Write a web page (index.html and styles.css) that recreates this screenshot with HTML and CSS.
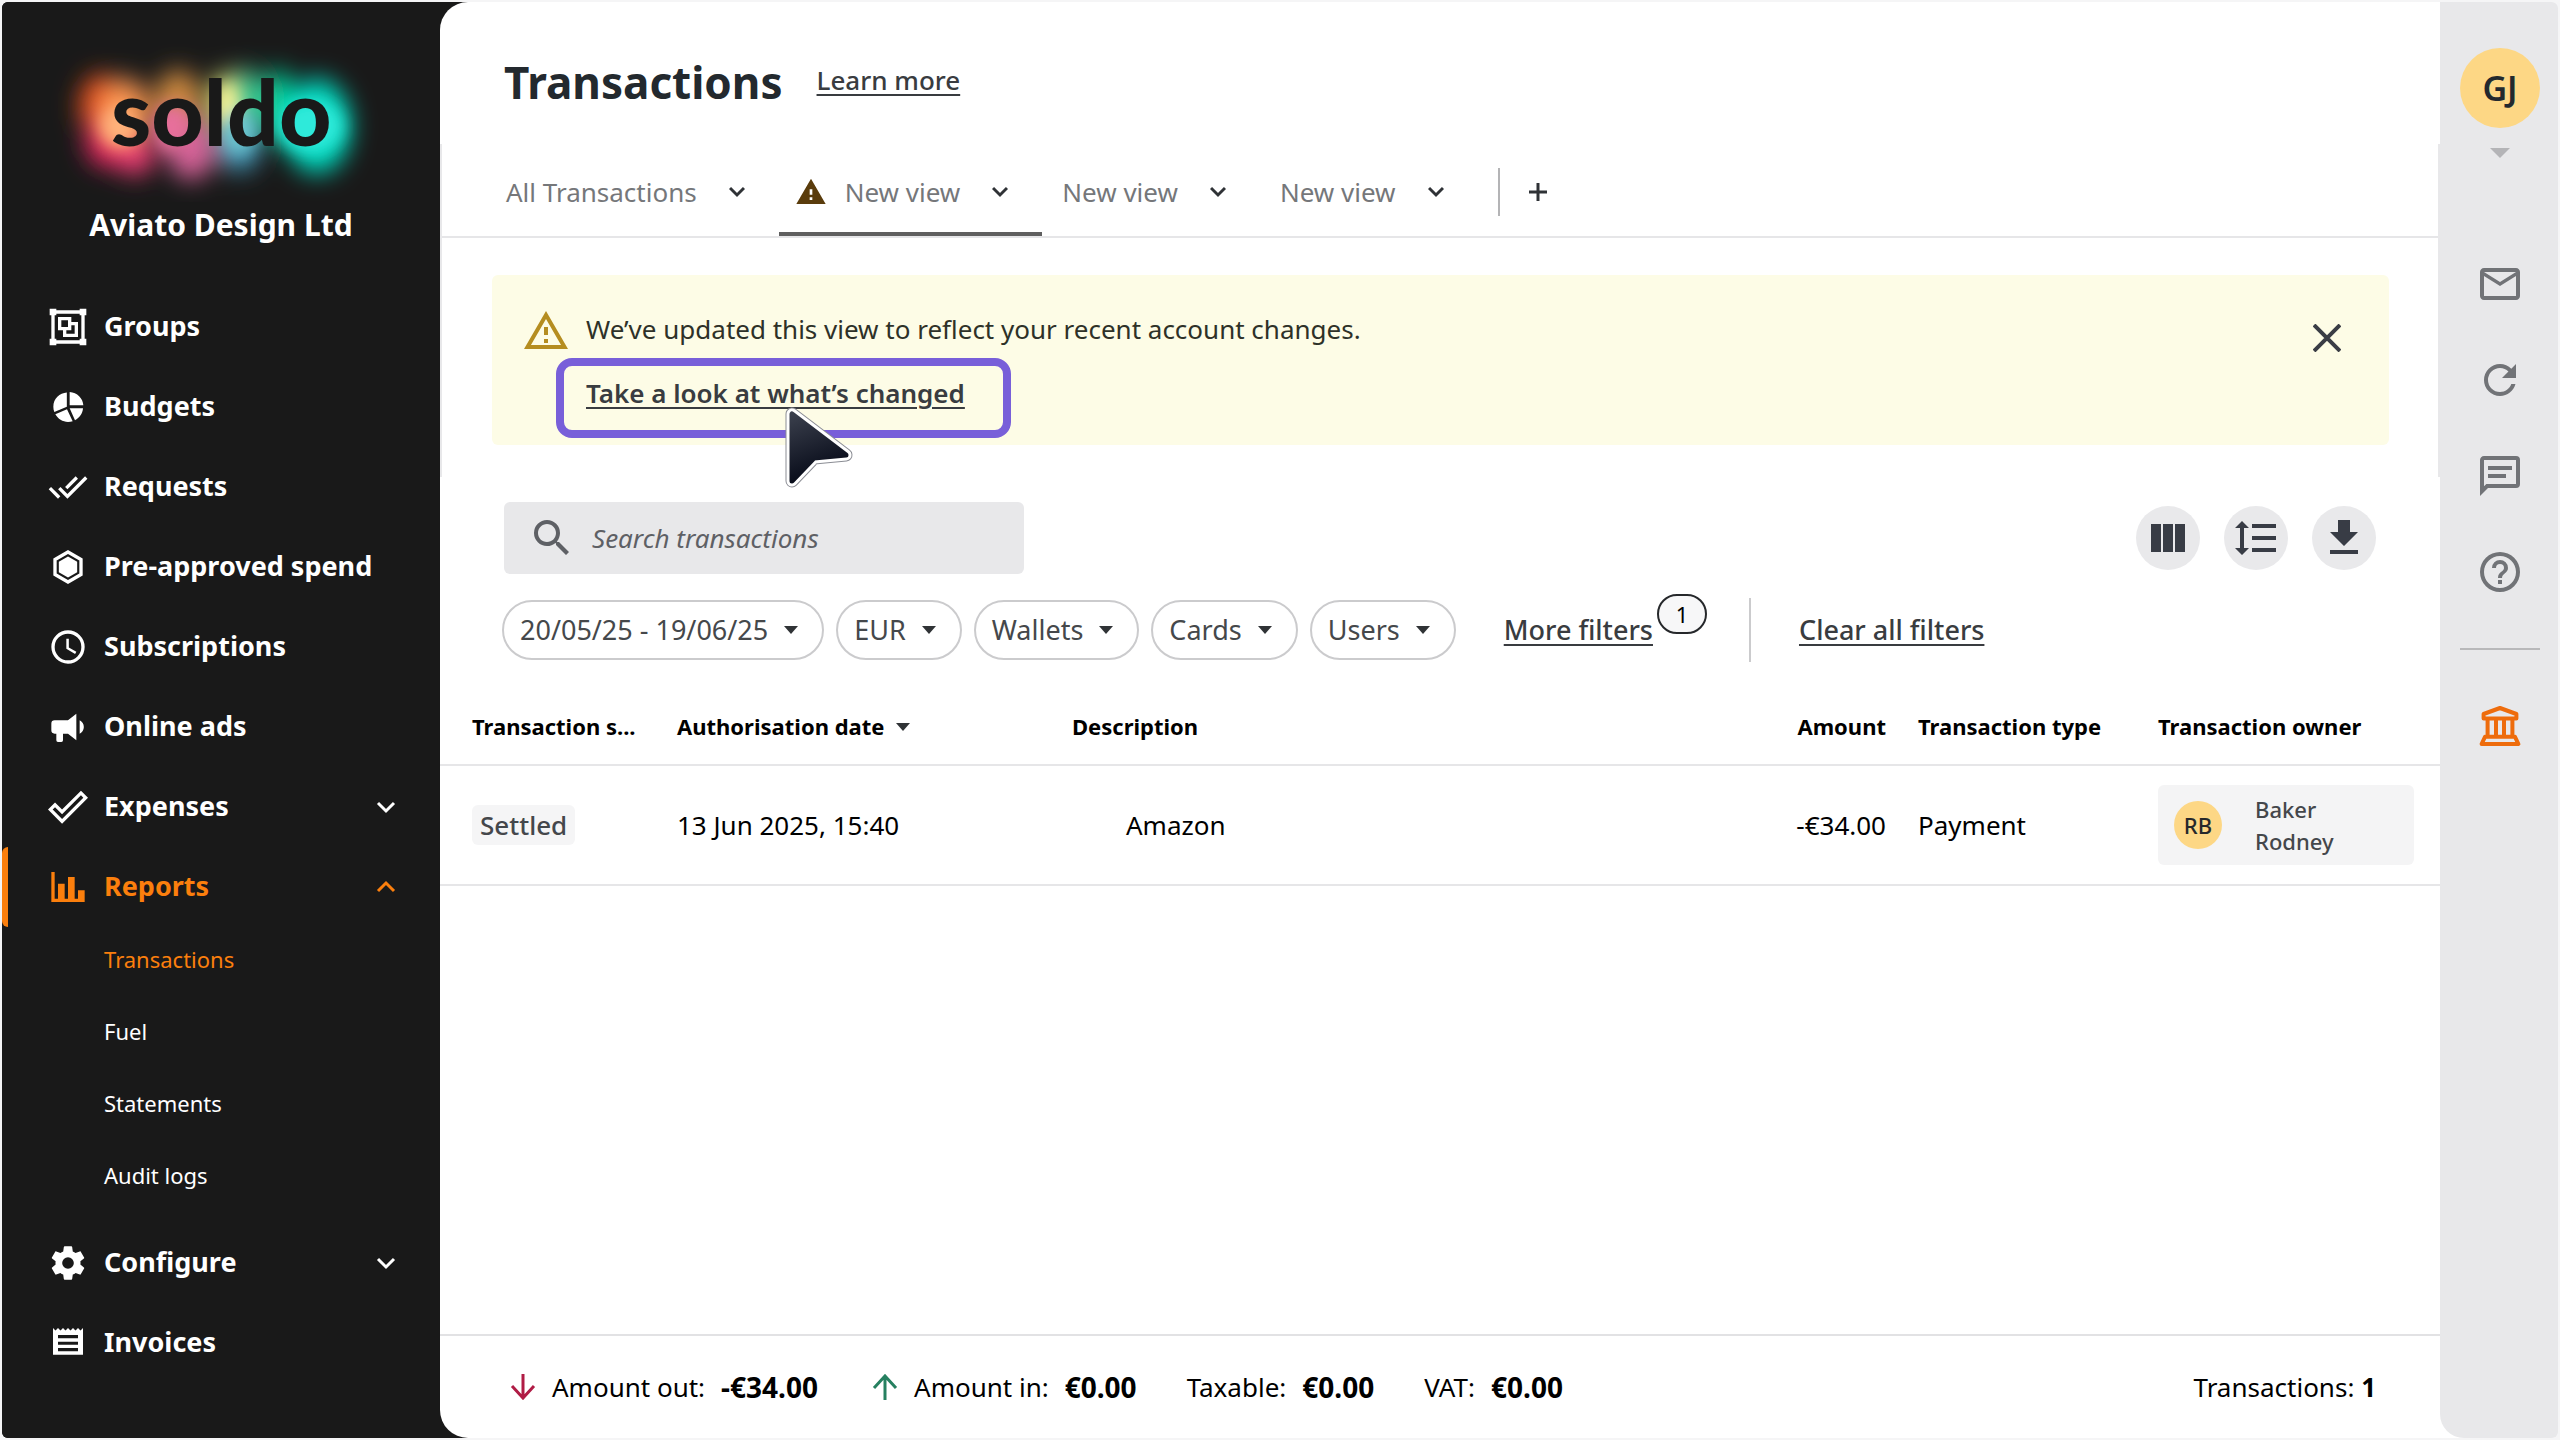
FILE: index.html
```html
<!DOCTYPE html>
<html lang="en">
<head>
<meta charset="utf-8">
<title>Transactions</title>
<link rel="stylesheet" href="styles.css">
</head>
<body>
<div class="app">
  <aside class="sidebar">
    <div class="brand">
      <svg class="brand-logo" viewBox="0 0 340 160" role="img" aria-label="soldo">
        <defs>
          <filter id="glow" x="-50%" y="-50%" width="200%" height="200%"><feGaussianBlur stdDeviation="12"/></filter>
          <filter id="core" x="-50%" y="-50%" width="200%" height="200%"><feGaussianBlur stdDeviation="8"/></filter>
        </defs>
        <g filter="url(#glow)">
          <ellipse cx="50" cy="64" rx="22" ry="32" fill="#e8501c"/>
          <ellipse cx="58" cy="100" rx="24" ry="26" fill="#e62860"/>
          <ellipse cx="84" cy="108" rx="20" ry="26" fill="#ee3c74"/>
          <ellipse cx="74" cy="68" rx="24" ry="32" fill="#fa9450"/>
          <ellipse cx="127" cy="62" rx="24" ry="34" fill="#cf8a40"/>
          <ellipse cx="140" cy="106" rx="24" ry="32" fill="#d8649a"/>
          <ellipse cx="174" cy="62" rx="14" ry="32" fill="#e6e878"/>
          <ellipse cx="196" cy="60" rx="18" ry="34" fill="#3ac890"/>
          <ellipse cx="188" cy="104" rx="22" ry="26" fill="#4494b4"/>
          <ellipse cx="228" cy="64" rx="14" ry="38" fill="#05d49c"/>
          <ellipse cx="266" cy="84" rx="34" ry="48" fill="#05d6bc"/>
        </g>
        <g filter="url(#core)">
          <ellipse cx="68" cy="84" rx="18" ry="20" fill="#ffb27c"/>
          <ellipse cx="120" cy="86" rx="18" ry="24" fill="#e8709c"/>
          <ellipse cx="176" cy="62" rx="9" ry="20" fill="#fdf79a"/>
          <ellipse cx="188" cy="90" rx="16" ry="22" fill="#6cc6d0"/>
          <ellipse cx="260" cy="84" rx="32" ry="26" fill="#2eeada"/>
        </g>
        <text class="brand-word" x="60" y="104">soldo</text>
      </svg>
      <div class="brand-company">Aviato Design Ltd</div>
    </div>

    <nav class="nav" aria-label="Main">
      <a class="nav-item" href="#"><svg class="nav-icon" viewBox="0 0 24 24"><path d="M1,1V5H2V19H1V23H5V22H19V23H23V19H22V5H23V1H19V2H5V1M5,4H19V5H20V19H19V20H5V19H4V5H5M6,6V14H9V18H18V9H14V6M8,8H12V12H8M14,11H16V16H11V14H14" fill-rule="evenodd"/></svg><span class="nav-label">Groups</span></a>
      <a class="nav-item" href="#"><svg class="nav-icon" viewBox="0 0 24 24"><path d="M13,3V11H21.200C21,6.800 17.500,3.200 13,3ZM11.300,3.300C7,3.500 3.200,7 3.200,11.800C3.200,12.900 3.400,14 3.800,15L11.300,11.800ZM11.400,13.300L4.400,16.400C5.900,19.100 8.800,21 12,21C13,21 13.900,20.800 14.800,20.500ZM13,12.700L16.200,19.900C18.900,18.500 20.800,15.800 21,12.700Z"/></svg><span class="nav-label">Budgets</span></a>
      <a class="nav-item" href="#"><svg class="nav-icon" viewBox="0 0 24 24"><path d="M0.410,13.410L6,19L7.410,17.580L1.830,12M22.240,5.580L11.660,16.170L7.500,12L6.070,13.410L11.660,19L23.660,7M18,7L16.590,5.580L10.240,11.930L11.660,13.340L18,7Z"/></svg><span class="nav-label">Requests</span></a>
      <a class="nav-item" href="#"><svg class="nav-icon" viewBox="0 0 24 24"><path d="M12,3 19.800,7.500V16.500L12,21 4.200,16.500V7.500Z" fill="none" stroke="currentColor" stroke-width="2"/><path d="M12,5.700 17.500,8.900V15.100L12,18.300 6.500,15.100V8.900Z"/></svg><span class="nav-label">Pre-approved spend</span></a>
      <a class="nav-item" href="#"><svg class="nav-icon" viewBox="0 0 24 24"><path d="M12,20A8,8 0 0,0 20,12A8,8 0 0,0 12,4A8,8 0 0,0 4,12A8,8 0 0,0 12,20M12,2A10,10 0 0,1 22,12A10,10 0 0,1 12,22C6.470,22 2,17.500 2,12A10,10 0 0,1 12,2M12.500,7V12.250L17,14.920L16.250,16.150L11,13V7H12.500Z"/></svg><span class="nav-label">Subscriptions</span></a>
      <a class="nav-item" href="#"><svg class="nav-icon" viewBox="0 0 24 24"><path d="M12,8H4A2,2 0 0,0 2,10V14A2,2 0 0,0 4,16H5V20A1,1 0 0,0 6,21H8A1,1 0 0,0 9,20V16H12L17,20V4L12,8M21.500,12C21.500,13.710 20.540,15.260 19,16V8C20.530,8.750 21.500,10.300 21.500,12Z"/></svg><span class="nav-label">Online ads</span></a>
      <button class="nav-item" type="button" aria-expanded="false"><svg class="nav-icon" viewBox="0 0 24 24"><path d="M19.780,2.200L24,6.440L8.440,22L0,13.550L4.220,9.330L8.440,13.550L19.780,2.200M19.780,5L8.440,16.360L4.220,12.190L2.810,13.550L8.440,19.170L21.190,6.440L19.780,5Z"/></svg><span class="nav-label">Expenses</span><svg class="nav-chevron" viewBox="0 0 20 20"><path d="M2 6l8 8 8-8"/></svg></button>
      <button class="nav-item nav-item-active" type="button" aria-expanded="true"><svg class="nav-icon" viewBox="0 0 24 24"><path d="M22,21H2V3H4V19H6V10H10V19H12V6H16V19H18V14H22V21Z"/></svg><span class="nav-label">Reports</span><svg class="nav-chevron" viewBox="0 0 20 20"><path d="M2 14l8-8 8 8"/></svg></button>
      <div class="subnav">
        <a class="subnav-item subnav-item-active" href="#">Transactions</a>
        <a class="subnav-item" href="#">Fuel</a>
        <a class="subnav-item" href="#">Statements</a>
        <a class="subnav-item" href="#">Audit logs</a>
      </div>
      <button class="nav-item" type="button" aria-expanded="false"><svg class="nav-icon" viewBox="0 0 24 24"><path d="M12,15.500A3.500,3.500 0 0,1 8.500,12A3.500,3.500 0 0,1 12,8.500A3.500,3.500 0 0,1 15.500,12A3.500,3.500 0 0,1 12,15.500M19.430,12.970C19.470,12.650 19.500,12.330 19.500,12C19.500,11.670 19.470,11.340 19.430,11L21.540,9.370C21.730,9.220 21.780,8.950 21.660,8.730L19.660,5.270C19.540,5.050 19.270,4.960 19.050,5.050L16.560,6.050C16.040,5.660 15.500,5.320 14.870,5.070L14.500,2.420C14.460,2.180 14.250,2 14,2H10C9.750,2 9.540,2.180 9.500,2.420L9.130,5.070C8.500,5.320 7.960,5.660 7.440,6.050L4.950,5.050C4.730,4.960 4.460,5.050 4.340,5.270L2.340,8.730C2.210,8.950 2.270,9.220 2.460,9.370L4.570,11C4.530,11.340 4.500,11.670 4.500,12C4.500,12.330 4.530,12.650 4.570,12.970L2.460,14.630C2.270,14.780 2.210,15.050 2.340,15.270L4.340,18.730C4.460,18.950 4.730,19.030 4.950,18.950L7.440,17.940C7.960,18.340 8.500,18.680 9.130,18.930L9.500,21.580C9.540,21.820 9.750,22 10,22H14C14.250,22 14.460,21.820 14.500,21.580L14.870,18.930C15.500,18.670 16.040,18.340 16.560,17.940L19.050,18.950C19.270,19.030 19.540,18.950 19.660,18.730L21.660,15.270C21.780,15.050 21.730,14.780 21.540,14.630L19.430,12.970Z"/></svg><span class="nav-label">Configure</span><svg class="nav-chevron" viewBox="0 0 20 20"><path d="M2 6l8 8 8-8"/></svg></button>
      <a class="nav-item" href="#"><svg class="nav-icon" viewBox="0 0 24 24"><path fill-rule="evenodd" d="M3,3L4.500,4.500 6,3 7.500,4.500 9,3 10.500,4.500 12,3 13.500,4.500 15,3 16.500,4.500 18,3 19.500,4.500 21,3V19H3ZM6,7.200V9.200H18V7.200ZM6,11.200V13H18V11.200ZM6,15V17H18V15Z"/></svg><span class="nav-label">Invoices</span></a>
    </nav>
  </aside>

  <main class="main">
    <header class="page-header">
      <h1 class="page-title">Transactions</h1>
      <a class="text-link" href="#">Learn more</a>
    </header>

    <section class="view">
      <div class="tabs">
        <button class="tab" type="button"><span>All Transactions</span><svg class="tab-chevron" viewBox="0 0 16 16"><path d="M1 4l7 7 7-7"/></svg></button>
        <button class="tab tab-active" type="button"><svg class="tab-alert" viewBox="0 0 24 24"><path d="M13,14H11V10H13M13,18H11V16H13M1,21H23L12,2L1,21Z"/></svg><span>New view</span><svg class="tab-chevron" viewBox="0 0 16 16"><path d="M1 4l7 7 7-7"/></svg></button>
        <button class="tab" type="button"><span>New view</span><svg class="tab-chevron" viewBox="0 0 16 16"><path d="M1 4l7 7 7-7"/></svg></button>
        <button class="tab" type="button"><span>New view</span><svg class="tab-chevron" viewBox="0 0 16 16"><path d="M1 4l7 7 7-7"/></svg></button>
        <button class="tab-add" type="button" aria-label="Add view"><svg viewBox="0 0 18 18"><path d="M9 0v18M0 9h18"/></svg></button>
      </div>

      <div class="banner" role="status">
        <svg class="banner-icon" viewBox="0 0 24 24"><path d="M12,2L1,21H23M12,6L19.530,19H4.470M11,10V14H13V10M11,16V18H13V16"/></svg>
        <div class="banner-body">
          <p class="banner-text">We’ve updated this view to reflect your recent account changes.</p>
          <div class="callout">
            <a class="text-link callout-link" href="#">Take a look at what’s changed</a>
            <span class="callout-ring"></span>
            <svg class="callout-cursor" viewBox="0 0 68 82">
              <defs><linearGradient id="arrow" x1="0" y1="0" x2="0.300" y2="1"><stop offset="0" stop-color="#3a3f4c"/><stop offset="1" stop-color="#060a18"/></linearGradient></defs>
              <path d="M7 7V74L29 51 61 48Z" fill="#8b8d94" stroke="#8b8d94" stroke-width="13" stroke-linejoin="round"/>
              <path d="M7 7V74L29 51 61 48Z" fill="#fff" stroke="#fff" stroke-width="11" stroke-linejoin="round"/>
              <path d="M7 7V74L29 51 61 48Z" fill="url(#arrow)" stroke="url(#arrow)" stroke-width="5" stroke-linejoin="round"/>
            </svg>
          </div>
        </div>
        <button class="banner-close" type="button" aria-label="Dismiss"><svg viewBox="0 0 28 28"><path d="M1 1l26 26M27 1L1 27"/></svg></button>
      </div>
    </section>

    <section class="tools">
      <label class="search">
        <svg class="search-icon" viewBox="0 0 24 24"><path d="M9.500,3A6.500,6.500 0 0,1 16,9.500C16,11.110 15.410,12.590 14.440,13.730L14.710,14H15.500L20.500,19L19,20.500L14,15.500V14.710L13.730,14.440C12.590,15.410 11.110,16 9.500,16A6.500,6.500 0 0,1 3,9.500A6.500,6.500 0 0,1 9.500,3M9.500,5C7,5 5,7 5,9.500C5,12 7,14 9.500,14C12,14 14,12 14,9.500C14,7 12,5 9.500,5Z"/></svg>
        <input class="search-input" type="text" placeholder="Search transactions" aria-label="Search transactions">
      </label>
      <div class="actions">
        <button class="round" type="button" aria-label="Columns"><svg viewBox="0 0 24 24"><path d="M3.500,5H8.500V19H3.500ZM9.500,5H14.500V19H9.500ZM15.500,5H20.500V19H15.500Z"/></svg></button>
        <button class="round" type="button" aria-label="Row height"><svg viewBox="0 0 24 24"><path d="M10,13H22V11H10M10,19H22V17H10M10,7H22V5H10M6,7H8.500L5,3.500L1.500,7H4V17H1.500L5,20.500L8.500,17H6V7Z"/></svg></button>
        <button class="round" type="button" aria-label="Download"><svg viewBox="0 0 24 24"><path d="M5,20H19V18H5M19,9H15V3H9V9H5L12,16L19,9Z"/></svg></button>
      </div>
    </section>

    <section class="filters">
      <button class="pill" type="button">20/05/25 - 19/06/25<span class="caret"></span></button>
      <button class="pill" type="button">EUR<span class="caret"></span></button>
      <button class="pill" type="button">Wallets<span class="caret"></span></button>
      <button class="pill" type="button">Cards<span class="caret"></span></button>
      <button class="pill" type="button">Users<span class="caret"></span></button>
      <div class="more"><a class="text-link" href="#">More filters</a><span class="more-count">1</span></div>
      <div class="clear"><a class="text-link" href="#">Clear all filters</a></div>
    </section>

    <table class="table">
      <colgroup><col class="col-status"><col class="col-date"><col><col class="col-amount"><col class="col-type"><col class="col-owner"></colgroup>
      <thead>
        <tr><th>Transaction s...</th><th>Authorisation date<span class="caret caret-sort"></span></th><th>Description</th><th class="cell-amount">Amount</th><th>Transaction type</th><th>Transaction owner</th></tr>
      </thead>
      <tbody>
        <tr>
          <td><span class="status">Settled</span></td>
          <td>13 Jun 2025, 15:40</td>
          <td class="cell-description">Amazon</td>
          <td class="cell-amount">-€34.00</td>
          <td>Payment</td>
          <td><div class="owner"><span class="owner-avatar">RB</span><span class="owner-name">Baker<br>Rodney</span></div></td>
        </tr>
      </tbody>
    </table>

    <footer class="totals">
      <div class="total"><svg class="total-arrow total-out" viewBox="0 0 26 26"><path d="M13 0v24M2 12l11 12 11-12"/></svg><span>Amount out:</span><strong>-€34.00</strong></div>
      <div class="total"><svg class="total-arrow total-in" viewBox="0 0 26 26"><path d="M13 26V2M2 14L13 2l11 12"/></svg><span>Amount in:</span><strong>€0.00</strong></div>
      <div class="total"><span>Taxable:</span><strong>€0.00</strong></div>
      <div class="total"><span>VAT:</span><strong>€0.00</strong></div>
      <div class="total-count">Transactions: <strong>1</strong></div>
    </footer>
  </main>

  <aside class="rail">
    <button class="profile" type="button"><span class="profile-avatar">GJ</span><span class="caret caret-profile"></span></button>
    <button class="rail-button" type="button" aria-label="Messages"><svg viewBox="0 0 24 24"><path d="M22,6C22,4.900 21.100,4 20,4H4C2.900,4 2,4.900 2,6V18C2,19.100 2.900,20 4,20H20C21.100,20 22,19.100 22,18V6M20,6L12,11L4,6H20M20,18H4V8L12,13L20,8V18Z"/></svg></button>
    <button class="rail-button" type="button" aria-label="Refresh"><svg viewBox="0 0 24 24"><path d="M17.650,6.350C16.200,4.900 14.210,4 12,4A8,8 0 0,0 4,12A8,8 0 0,0 12,20C15.730,20 18.840,17.450 19.730,14H17.650C16.830,16.330 14.610,18 12,18A6,6 0 0,1 6,12A6,6 0 0,1 12,6C13.660,6 15.140,6.690 16.220,7.780L13,11H20V4L17.650,6.350Z"/></svg></button>
    <button class="rail-button" type="button" aria-label="Chat"><svg viewBox="0 0 24 24"><path d="M20,2A2,2 0 0,1 22,4V16A2,2 0 0,1 20,18H6L2,22V4C2,2.890 2.900,2 4,2H20M4,4V17.170L5.170,16H20V4H4M6,7H18V9H6V7M6,11H15V13H6V11Z"/></svg></button>
    <button class="rail-button" type="button" aria-label="Help"><svg viewBox="0 0 24 24"><path d="M11,18H13V16H11V18M12,2A10,10 0 0,0 2,12A10,10 0 0,0 12,22A10,10 0 0,0 22,12A10,10 0 0,0 12,2M12,20C7.590,20 4,16.410 4,12C4,7.590 7.590,4 12,4C16.410,4 20,7.590 20,12C20,16.410 16.410,20 12,20M12,6A4,4 0 0,0 8,10H10A2,2 0 0,1 12,8A2,2 0 0,1 14,10C14,12 11,11.750 11,15H13C13,12.750 16,12.500 16,10A4,4 0 0,0 12,6Z"/></svg></button>
    <hr class="rail-rule">
    <button class="rail-button rail-bank" type="button" aria-label="Bank"><svg viewBox="0 0 24 24"><path d="M12,3L3.800,6V8.300H20.200V6Z M4.500,17.400H19.500L21.200,21H2.800Z M5.800,8.500V17M10,8.500V17M14,8.500V17M18.200,8.500V17"/></svg></button>
  </aside>
</div>
</body>
</html>
```
FILE: styles.css
```css
* { box-sizing: border-box; }

body {
  margin: 0;
  background: #f5f5f6;
  color: #000;
  font: 400 26px/40px "Noto Sans", "Open Sans", sans-serif;
}

button {
  margin: 0;
  padding: 0;
  border: 0;
  background: none;
  color: inherit;
  font: inherit;
  text-align: left;
  cursor: pointer;
}

a { color: inherit; text-decoration: none; }
svg { display: block; flex: none; fill: currentColor; }

.app {
  display: grid;
  grid-template-columns: 438px minmax(0, 1fr) 118px;
  min-height: calc(100vh - 4px);
  margin: 2px;
  border-radius: 6px;
  overflow: hidden;
  background: linear-gradient(to right, #191919 50%, #fff 50%);
}

.text-link {
  color: #393c40;
  font-weight: 500;
  text-decoration: underline;
  text-decoration-thickness: 2px;
  text-underline-offset: 4px;
}

.caret {
  display: inline-block;
  border: 7px solid transparent;
  border-top: 8px solid #303336;
  border-bottom: 0;
}

/* Sidebar */
.sidebar { background: #191919; color: #fff; }
.brand { display: flex; flex-direction: column; align-items: center; padding-top: 40px; }
.brand-logo { width: 340px; height: 160px; }
.brand-word { font: 900 91px Lato, sans-serif; fill: #191919; }
.brand-company { font-size: 30px; font-weight: 700; line-height: 46px; }
.nav { display: flex; flex-direction: column; padding-top: 39px; }

.nav-item {
  display: flex;
  align-items: center;
  gap: 16px;
  height: 80px;
  padding: 0 44px 0 46px;
  font-size: 27px;
  font-weight: 700;
}
.nav-item-active { color: #fb7f0d; background: linear-gradient(#fb7f0d, #fb7f0d) left / 6px 100% no-repeat; border-radius: 6px; }
.nav-icon { width: 40px; height: 40px; }
.nav-label { flex: 1; padding-bottom: 2px; }
.nav-chevron { width: 20px; height: 20px; fill: none; stroke: currentColor; stroke-width: 3; }
.subnav { display: flex; flex-direction: column; padding-bottom: 8px; }
.subnav-item { padding: 12px 20px 20px 102px; font-size: 22px; }
.subnav-item-active { color: #fb7f0d; }

/* Main column */
.main {
  display: flex;
  flex-direction: column;
  background: #fff;
  border-radius: 28px 0 0 28px;
}
.page-header { display: flex; align-items: center; gap: 34px; padding: 50px 64px 32px; }
.page-title { margin: 0; color: #23292e; font-size: 44px; font-weight: 700; line-height: 60px; }
.page-header .text-link { padding-bottom: 4px; }
.view { padding-bottom: 32px; border: 2px solid #e8e8ea; border-width: 0 2px; }

.tabs { display: flex; align-items: flex-end; padding-left: 44px; height: 94px; border-bottom: 2px solid #e6e6e8; }
.tab {
  display: flex;
  align-items: center;
  gap: 32px;
  height: 92px;
  padding: 8px 34px 0 20px;
  border-bottom: 4px solid transparent;
  color: #75777a;
}
.tab-active { padding-left: 16px; border-color: #5f5f5f; }
.tab-chevron { width: 16px; height: 16px; fill: none; stroke: #2f3236; stroke-width: 3; }
.tab-alert { width: 32px; height: 32px; margin-right: -14px; color: #5a3c0c; }
.tab-add { height: 48px; margin: 0 0 20px 20px; padding-left: 29px; border-left: 2px solid #b4b4b6; }
.tab-add svg { width: 18px; height: 18px; stroke: #2f3236; stroke-width: 3; }

.banner {
  display: flex;
  gap: 16px;
  margin: 37px 49px 0 50px;
  padding: 22px 48px 20px 30px;
  border-radius: 6px;
  background: #fdfce6;
}
.banner-icon { width: 48px; height: 48px; margin-top: 10px; color: #b58d20; }
.banner-body { flex: 1; }
.banner-text { margin: 0; color: #2e3128; line-height: 64px; }
.callout { position: relative; width: max-content; line-height: 64px; }
.callout-link { font-weight: 600; }
.callout-ring { position: absolute; inset: -3px -46px -13px -30px; border: 8px solid #785fd9; border-radius: 16px; pointer-events: none; }
.callout-cursor { position: absolute; top: 46px; left: 199px; width: 68px; height: 82px; overflow: visible; pointer-events: none; }
.banner-close { align-self: flex-start; margin-top: 27px; }
.banner-close svg { width: 28px; height: 28px; stroke: #3a3d45; stroke-width: 4; }

/* Search and table actions */
.tools { display: flex; align-items: center; justify-content: space-between; padding: 25px 64px 0; }
.search {
  display: flex;
  align-items: center;
  gap: 16px;
  width: 520px;
  height: 72px;
  padding-left: 24px;
  border-radius: 6px;
  background: #e8e8ea;
}
.search-icon { width: 48px; height: 48px; color: #5e6065; }
.search-input { flex: 1; min-width: 0; padding: 0; border: 0; outline: 0; background: none; color: #303336; font: inherit; }
.search-input::placeholder { color: #5e6065; font-style: italic; opacity: 1; }
.actions { display: flex; gap: 24px; }
.round { display: grid; place-items: center; width: 64px; height: 64px; border-radius: 50%; background: #e9e9eb; color: #383c45; }
.round svg { width: 48px; height: 48px; }

/* Filters */
.filters { display: flex; align-items: center; gap: 12px; padding: 24px 62px 0; font-size: 27px; white-space: nowrap; }
.pill {
  display: flex;
  align-items: center;
  gap: 16px;
  height: 60px;
  padding: 0 24px 0 16px;
  border: 2px solid #cbcbcd;
  border-radius: 30px;
  color: #45484b;
}
.more { position: relative; margin-left: 36px; }
.more-count {
  position: absolute;
  top: -16px;
  left: 100%;
  width: 50px;
  height: 40px;
  margin-left: 4px;
  border: 2px solid #26282b;
  border-radius: 20px;
  background: #f7f7f8;
  font-size: 22px;
  line-height: 36px;
  text-align: center;
}
.clear { margin-left: 84px; padding: 12px 0 12px 48px; border-left: 2px solid #cbcbcd; }

/* Table */
.table { width: 100%; margin-top: 25px; border-collapse: collapse; table-layout: fixed; }
.col-status { width: 221px; }
.col-date { width: 395px; }
.col-amount { width: 160px; }
.col-type { width: 240px; }
.col-owner { width: 298px; }
.table th, .table td { padding: 0 0 0 16px; border-bottom: 2px solid #e6e6e8; text-align: left; white-space: nowrap; }
.table th { height: 78px; font-size: 22px; font-weight: 700; }
.table td { height: 120px; }
.table th:first-child, .table td:first-child { padding-left: 32px; }
.table .cell-amount { padding: 0 16px 0 0; text-align: right; }
.table .cell-description { padding-left: 70px; }
.caret-sort { margin: 0 0 4px 12px; }
.status { display: inline-block; padding: 0 8px; border-radius: 6px; background: #f5f5f6; color: #44474b; font-weight: 500; }
.owner { display: flex; align-items: center; gap: 33px; width: 256px; height: 80px; padding: 0 16px; border-radius: 6px; background: #f4f4f5; }
.owner-avatar { display: grid; place-items: center; width: 48px; height: 48px; border-radius: 50%; background: #fdd785; color: #26282b; font-size: 22px; font-weight: 500; }
.owner-name { color: #44474b; font-size: 22px; font-weight: 500; line-height: 32px; }

/* Totals */
.totals { display: flex; align-items: center; gap: 50px; height: 104px; margin-top: auto; padding: 0 64px 0 66px; border-top: 2px solid #e2e2e4; }
.total { display: flex; align-items: center; gap: 16px; }
.total strong { font-size: 28px; }
.total-arrow { width: 26px; height: 26px; margin-left: 4px; fill: none; stroke-width: 3; }
.total-out { stroke: #b01c45; }
.total-in { stroke: #268060; }
.total-count { margin-left: auto; }

/* Right rail */
.rail { display: flex; flex-direction: column; align-items: center; padding-left: 2px; background: #e8e8ea; border-radius: 0 0 0 24px; color: #717377; }
.profile { display: flex; flex-direction: column; align-items: center; gap: 20px; margin: 46px 0 102px; }
.profile-avatar { display: grid; place-items: center; width: 80px; height: 80px; border-radius: 50%; background: #fdd785; color: #23292e; font-size: 34px; font-weight: 600; }
.caret-profile { border-width: 10px 10px 0; border-top-color: #b4b4b7; }
.rail-button { margin-bottom: 48px; }
.rail-button svg { width: 48px; height: 48px; }
.rail-rule { width: 80px; height: 2px; margin: 4px 0 52px; border: 0; background: #b8b8ba; }
.rail-bank svg { fill: none; stroke: #ee6c0c; stroke-width: 2; stroke-linejoin: round; }
```
